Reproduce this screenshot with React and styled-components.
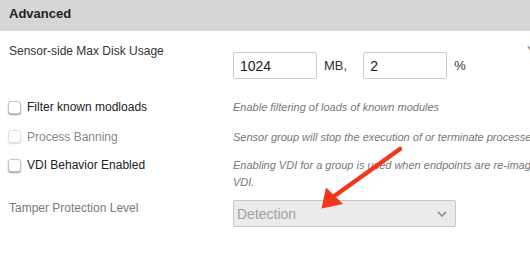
import React from "react";
import styled, { createGlobalStyle } from "styled-components";

const Global = createGlobalStyle`
  html, body { margin: 0; padding: 0; background: #fff; overflow: hidden; }
  body { font-family: "Liberation Sans", Arial, Helvetica, sans-serif; color: #333; }
  * { box-sizing: border-box; }
`;

const Page = styled.div`
  position: relative;
  width: 530px;
  height: 258px;
  overflow: hidden;
`;

const Panel = styled.section`
  width: 820px;
`;

const Header = styled.h2`
  margin: 0;
  height: 31px;
  padding: 6px 9px 0;
  background: #d6d6d6;
  color: #222;
  font-size: 13px;
  font-weight: 700;
  line-height: 16px;
`;

const Row = styled.div`
  display: grid;
  grid-template-columns: 224px 294px 1fr;
  align-items: start;
  padding: ${(p) => p.$top}px 0 0 9px;
`;

const Label = styled.div`
  font-size: 12px;
  line-height: 16px;
  color: ${(p) => (p.$muted ? "#7a7a7a" : "#333")};
`;

const CheckLabel = styled.label`
  display: flex;
  align-items: center;
  gap: 6px;
  margin-left: -1px;
  font-size: 12px;
  line-height: 16px;
  color: ${(p) => (p.$disabled ? "#888" : "#222")};
`;

const Box = styled.span`
  display: inline-block;
  width: 13px;
  height: 13px;
  border-radius: 3px;
  background: #fff;
  border: 1px solid ${(p) => (p.$disabled ? "#e2e2e2" : "#c4c4c4")};
  box-shadow: 0 1px 1.5px
    ${(p) => (p.$disabled ? "rgba(0,0,0,0.15)" : "rgba(0,0,0,0.4)")};
`;

const Desc = styled.div`
  grid-column: 2 / span 2;
  font-size: 11px;
  font-style: italic;
  line-height: 16.5px;
  color: #777;
  white-space: nowrap;
`;

const Aside = styled.div`
  font-size: 12px;
  line-height: 16px;
  color: #777;
  white-space: nowrap;
`;

const InputGroup = styled.div`
  display: flex;
  align-items: center;
  margin-top: 9px;
`;

const Input = styled.input`
  width: 84px;
  height: 27px;
  padding: 0 6px;
  border: 1px solid #ccc;
  border-radius: 2px;
  font-family: inherit;
  font-size: 14px;
  color: #222;
  background: #fff;
  outline: none;
`;

const Unit = styled.span`
  font-size: 13px;
  color: #333;
  margin: 0 ${(p) => p.$after}px 0 7px;
`;

const Select = styled.div`
  width: 223px;
  height: 27px;
  display: flex;
  align-items: center;
  justify-content: space-between;
  padding: 0 8px 0 3px;
  background: #ebebeb;
  border: 1px solid #c6c6c6;
  border-radius: 2px;
  font-size: 14px;
  color: #a2a2a2;
`;

const Overlay = styled.svg`
  position: absolute;
  left: 0;
  top: 0;
  pointer-events: none;
`;

function Check({ label, disabled }) {
  return (
    <CheckLabel $disabled={disabled}>
      <Box $disabled={disabled} />
      {label}
    </CheckLabel>
  );
}

export default function App() {
  return (
    <Page>
      <Global />
      <Panel>
        <Header>Advanced</Header>
        <Row $top={12}>
          <Label>Sensor-side Max Disk Usage</Label>
          <InputGroup>
            <Input defaultValue="1024" />
            <Unit $after={16}>MB,</Unit>
            <Input defaultValue="2" />
            <Unit $after={0}>%</Unit>
          </InputGroup>
          <Aside>You can limit the disk space used by the sensor</Aside>
        </Row>
        <Row $top={20}>
          <Check label="Filter known modloads" />
          <Desc>Enable filtering of loads of known modules</Desc>
        </Row>
        <Row $top={13}>
          <Check label="Process Banning" disabled />
          <Desc>
            Sensor group will stop the execution of or terminate processes that are banned
          </Desc>
        </Row>
        <Row $top={12}>
          <Check label="VDI Behavior Enabled" />
          <Desc>
            Enabling VDI for a group is used when endpoints are re-imaged frequently, such as in non-persistent
            <br />
            VDI.
          </Desc>
        </Row>
        <Row $top={10}>
          <Label $muted>Tamper Protection Level</Label>
          <Select>
            <span>Detection</span>
            <svg width="10" height="6" viewBox="0 0 10 6">
              <path d="M1 1 L5 5 L9 1" fill="none" stroke="#999" strokeWidth="1.8" />
            </svg>
          </Select>
        </Row>
      </Panel>
      <Overlay width="530" height="258" viewBox="0 0 530 258">
        <line x1="400" y1="149" x2="333" y2="197" stroke="#f4361d" strokeWidth="4.5" strokeLinecap="round" />
        <polygon points="321.5,208.5 326,187.5 343,204" fill="#f4361d" />
      </Overlay>
    </Page>
  );
}
